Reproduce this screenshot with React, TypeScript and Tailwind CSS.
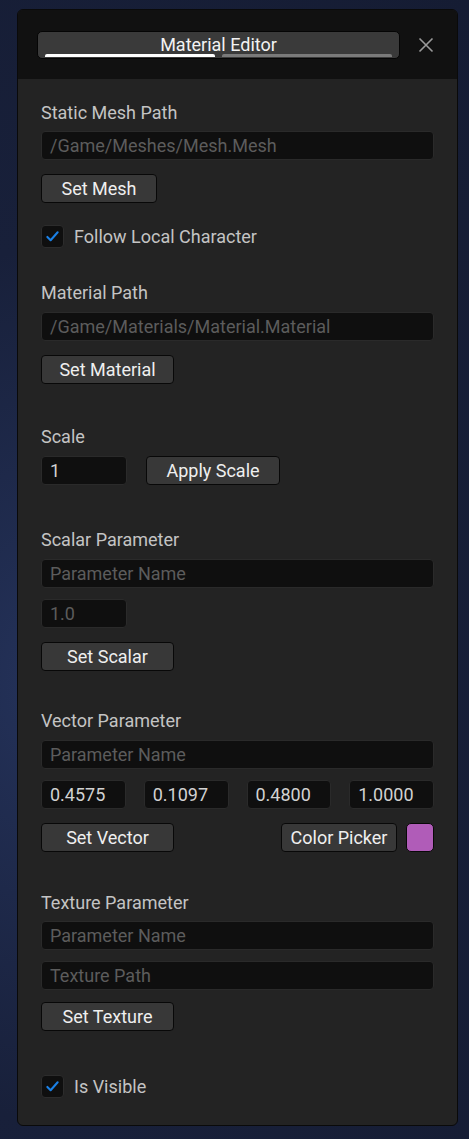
import React from "react";

const font = { fontFamily: "Roboto, 'Noto Sans', sans-serif" };

function Label({ children, className = "" }: { children: React.ReactNode; className?: string }) {
  return <div className={`text-[18px] leading-[20px] text-[#c4c4c4] ${className}`}>{children}</div>;
}

function Field({ value, placeholder, className = "" }: { value?: string; placeholder?: string; className?: string }) {
  return (
    <div
      className={`h-[29px] rounded-[4px] border border-[#2a2a2a] bg-[#0f0f0f] px-[8px] flex items-center text-[18px] ${
        value ? "text-[#d2d2d2]" : "text-[#5c5c5c]"
      } ${className}`}
    >
      {value ?? placeholder}
    </div>
  );
}

function Button({ children, className = "" }: { children: React.ReactNode; className?: string }) {
  return (
    <div
      className={`h-[29px] rounded-[4px] border border-[#080808] bg-[#383838] flex items-center justify-center text-[18px] text-[#efefef] ${className}`}
    >
      {children}
    </div>
  );
}

function Check({ label, className = "" }: { label: string; className?: string }) {
  return (
    <div className={`flex items-center gap-[10px] ${className}`}>
      <div className="w-[23px] h-[23px] rounded-[4px] border border-[#2c2c2c] bg-[#0f0f0f] flex items-center justify-center">
        <svg width="15" height="15" viewBox="0 0 16 16" fill="none">
          <path d="M2.5 8.5 L6 12 L13.5 3.5" stroke="#1a80e6" strokeWidth="2.2" strokeLinecap="round" strokeLinejoin="round" />
        </svg>
      </div>
      <span className="text-[18px] text-[#c4c4c4]">{label}</span>
    </div>
  );
}

export default function App() {
  return (
    <div
      style={font}
      className="w-[469px] h-[1139px] bg-[radial-gradient(ellipse_at_10%_60%,#24325a_0%,#18203a_45%,#151c33_100%)] pt-[9px] px-[17px]"
    >
      <div className="w-[441px] h-[1117px] rounded-[6px] border border-[#0a0a0a] bg-[#232323] overflow-hidden flex flex-col">
        {/* header */}
        <div className="h-[69px] bg-[#111111] flex items-start pt-[21px] pl-[19px] pr-[20px]">
          <div className="relative w-[363px] h-[28px] rounded-[5px] border border-[#050505] bg-[#3a3a3a] flex items-start justify-center">
            <span className="text-[18px] leading-[26px] text-[#f2f2f2]">Material Editor</span>
            <div className="absolute left-[7px] bottom-[1px] w-[170px] h-[3px] rounded-t-[2px] bg-white" />
            <div className="absolute left-[184px] bottom-[1px] w-[170px] h-[3px] rounded-t-[2px] bg-[#7a7a7a]" />
          </div>
          <div className="ml-auto mt-[6px] mr-[3px]">
            <svg width="16" height="16" viewBox="0 0 16 16">
              <path d="M1.5 1.5 L14.5 14.5 M14.5 1.5 L1.5 14.5" stroke="#9a9a9a" strokeWidth="1.6" />
            </svg>
          </div>
        </div>

        {/* body */}
        <div className="flex flex-col px-[23px] pt-[24px]">
          <Label>Static Mesh Path</Label>
          <Field className="mt-[8px]" placeholder="/Game/Meshes/Mesh.Mesh" />
          <Button className="mt-[14px] w-[116px]">Set Mesh</Button>
          <Check className="mt-[20px]" label="Follow Local Character" />

          <Label className="mt-[33px]">Material Path</Label>
          <Field className="mt-[9px]" placeholder="/Game/Materials/Material.Material" />
          <Button className="mt-[14px] w-[133px]">Set Material</Button>

          <Label className="mt-[43px]">Scale</Label>
          <div className="mt-[9px] flex items-center gap-[19px]">
            <Field className="w-[86px]" value="1" />
            <Button className="w-[134px]">Apply Scale</Button>
          </div>

          <Label className="mt-[45px]">Scalar Parameter</Label>
          <Field className="mt-[9px]" placeholder="Parameter Name" />
          <Field className="mt-[11px] w-[86px]" placeholder="1.0" />
          <Button className="mt-[14px] w-[133px]">Set Scalar</Button>

          <Label className="mt-[40px]">Vector Parameter</Label>
          <Field className="mt-[9px]" placeholder="Parameter Name" />
          <div className="mt-[11px] grid grid-cols-4 gap-x-[18px]">
            <Field value="0.4575" />
            <Field value="0.1097" />
            <Field value="0.4800" />
            <Field value="1.0000" />
          </div>
          <div className="mt-[14px] flex items-center">
            <Button className="w-[133px]">Set Vector</Button>
            <Button className="ml-auto w-[116px]">Color Picker</Button>
            <div className="ml-[9px] w-[28px] h-[29px] rounded-[5px] border border-[#080808] bg-[#b05cb8]" />
          </div>

          <Label className="mt-[41px]">Texture Parameter</Label>
          <Field className="mt-[8px]" placeholder="Parameter Name" />
          <Field className="mt-[11px]" placeholder="Texture Path" />
          <Button className="mt-[12px] w-[133px]">Set Texture</Button>

          <Check className="mt-[42px]" label="Is Visible" />
        </div>
      </div>
    </div>
  );
}
